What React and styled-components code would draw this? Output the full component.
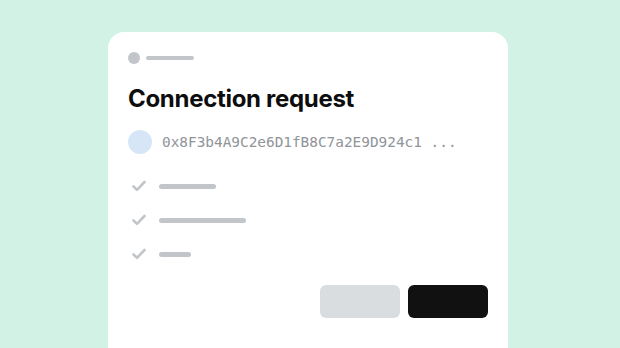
import React from "react";
import styled, { createGlobalStyle } from "styled-components";

const GlobalStyle = createGlobalStyle`
    html, body {
        margin: 0;
        padding: 0;
        background: #d1f2e4;
        width: 620px;
        height: 348px;
        overflow: hidden;
    }
    * { box-sizing: border-box; }
`;

const Page = styled.div`
    width: 620px;
    height: 348px;
    overflow: hidden;
    display: flex;
    justify-content: flex-start;
    padding: 32px 0 0 108px;
    font-family: Inter, "Liberation Sans", sans-serif;
`;

const Card = styled.div`
    width: 400px;
    height: 340px;
    flex-shrink: 0;
    background: #fff;
    border-radius: 16px;
    padding: 20px 20px;
    display: flex;
    flex-direction: column;
`;

const Header = styled.div`
    display: flex;
    align-items: center;
    gap: 6px;
    height: 12px;
`;

const Dot = styled.div`
    width: 12px;
    height: 12px;
    border-radius: 50%;
    background: #c2c6ca;
`;

const Bar = styled.div`
    width: ${p => p.w}px;
    height: ${p => p.h || 4}px;
    border-radius: 3px;
    background: #c2c6ca;
`;

const Title = styled.h1`
    margin: 19px 0 0;
    font-size: 24px;
    line-height: 32px;
    font-weight: 700;
    color: #0d0d0d;
    letter-spacing: -0.3px;
`;

const Account = styled.div`
    display: flex;
    align-items: center;
    gap: 10px;
    margin-top: 15px;
`;

const Avatar = styled.div`
    width: 24px;
    height: 24px;
    border-radius: 50%;
    background: #d6e6f6;
`;

const Address = styled.span`
    font-family: "DejaVu Sans Mono", "Liberation Mono", monospace;
    font-size: 14.4px;
    color: #8f9499;
`;

const List = styled.div`
    display: flex;
    flex-direction: column;
    gap: 22px;
    margin-top: 26px;
`;

const Item = styled.div`
    display: flex;
    align-items: center;
    gap: 13px;
    height: 12px;
    padding-left: 4px;
`;

const Actions = styled.div`
    display: flex;
    justify-content: flex-end;
    gap: 8px;
    margin-top: 25px;
`;

const Button = styled.button`
    width: 80px;
    height: 33px;
    border: 0;
    border-radius: 6px;
    background: ${p => (p.primary ? "#111111" : "#dadde0")};
`;

const Check = () => (
    <svg width="14" height="12" viewBox="0 0 14 12" fill="none">
        <path d="M1.5 6.5 L5 9.8 L12.5 2" stroke="#c2c6ca" strokeWidth="2.6" strokeLinecap="round" strokeLinejoin="round" />
    </svg>
);

const items = [57, 87, 32];

const App = () => {
    return (
        <Page>
            <GlobalStyle />
            <Card>
                <Header>
                    <Dot />
                    <Bar w={48} />
                </Header>
                <Title>Connection request</Title>
                <Account>
                    <Avatar />
                    <Address>0x8F3b4A9C2e6D1fB8C7a2E9D924c1 ...</Address>
                </Account>
                <List>
                    {items.map((w, i) => (
                        <Item key={i}>
                            <Check />
                            <Bar w={w} h={5} />
                        </Item>
                    ))}
                </List>
                <Actions>
                    <Button />
                    <Button primary />
                </Actions>
            </Card>
        </Page>
    );
};

export default App;
